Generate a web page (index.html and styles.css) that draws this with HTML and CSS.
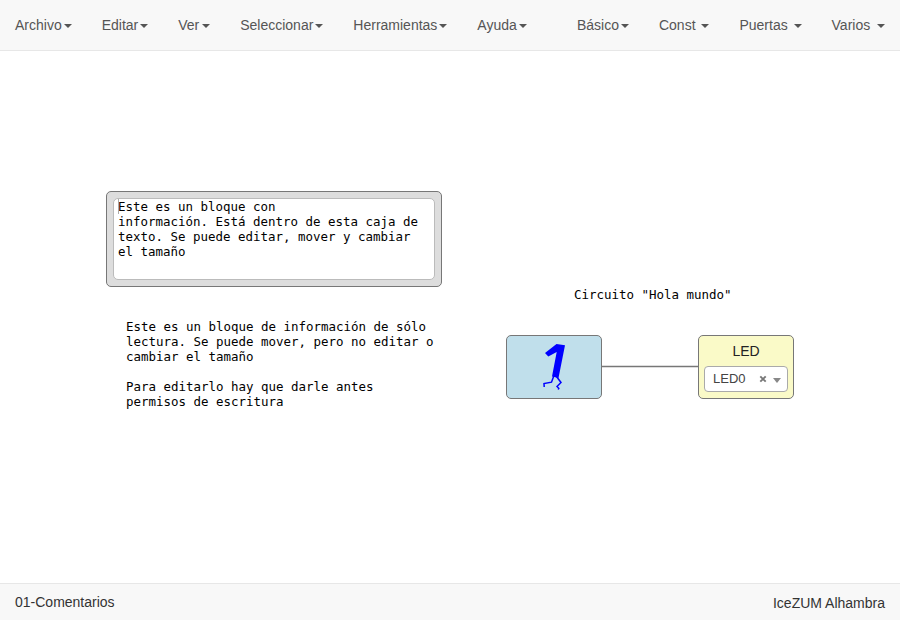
FILE: index.html
```html
<!DOCTYPE html>
<html lang="es">
<head>
<meta charset="utf-8">
<title>01-Comentarios</title>
<link rel="stylesheet" href="styles.css">
</head>
<body>
<nav class="navbar">
  <ul class="menu">
    <li>Archivo<b class="caret"></b></li>
    <li>Editar<b class="caret"></b></li>
    <li class="wide">Ver<b class="caret"></b></li>
    <li>Seleccionar<b class="caret"></b></li>
    <li>Herramientas<b class="caret"></b></li>
    <li>Ayuda<b class="caret"></b></li>
  </ul>
  <ul class="menu">
    <li>Básico<b class="caret"></b></li>
    <li>Const <b class="caret"></b></li>
    <li>Puertas <b class="caret"></b></li>
    <li class="wide">Varios <b class="caret"></b></li>
  </ul>
</nav>
<main class="canvas">
  <div class="node info-box">
    <div class="editor"><span class="cursor"></span>Este es un bloque con
información. Está dentro de esta caja de
texto. Se puede editar, mover y cambiar
el tamaño</div>
  </div>
  <div class="node note note-readonly">Este es un bloque de información de sólo
lectura. Se puede mover, pero no editar o
cambiar el tamaño

Para editarlo hay que darle antes
permisos de escritura</div>
  <div class="node note note-title">Circuito "Hola mundo"</div>
  <div class="node wire"></div>
  <div class="node block block-one">
    <svg width="30" height="50" viewBox="0 0 30 50">
      <path fill="#00f" d="M16.500 2 25 3.300 18.500 36 12 34.500 16.700 10 8.300 14.500 5 11z"/>
      <path fill="none" stroke="#00f" stroke-width="1.500" d="M13.800 34 11.500 40.200 4 41.500 4.200 45M16.500 34.500 21 40.500 17 44.500 18.800 46.300 18.200 47.500"/>
    </svg>
  </div>
  <div class="node block block-led">
    <div class="led-label">LED</div>
    <div class="select"><span class="value">LED0</span>
      <svg class="clear" width="8" height="8" viewBox="0 0 8 8"><path d="M1.300 1.300 6.700 6.700M6.700 1.300 1.300 6.700" stroke="#777" stroke-width="1.900"/></svg>
      <i class="arrow"></i></div>
  </div>
</main>
<footer class="footer"><span>01-Comentarios</span><span class="board">IceZUM Alhambra</span></footer>
</body>
</html>
```
FILE: styles.css
```css
* { box-sizing: border-box; }
body {
  margin: 0;
  height: 620px;
  display: flex;
  flex-direction: column;
  overflow: hidden;
  background: #fff;
  color: #333;
  font: 14px/20px "Liberation Sans", Arial, sans-serif;
}
.navbar {
  height: 51px;
  flex: none;
  display: flex;
  justify-content: space-between;
  background: #f8f8f8;
  border-bottom: 1px solid #e7e7e7;
  color: #555;
}
.menu { display: flex; margin: 0; padding: 0; list-style: none; }
.menu li { padding: 15px; white-space: nowrap; }
.caret {
  display: inline-block;
  margin-left: 2px;
  vertical-align: middle;
  border-top: 4px solid #555;
  border-left: 4px solid transparent;
  border-right: 4px solid transparent;
}
.wide .caret { margin-left: 2.900px; }
.canvas { flex: 1; position: relative; }
.node { position: absolute; }
.info-box {
  left: 106px;
  top: 140px;
  width: 336px;
  height: 96px;
  padding: 6px;
  background: #ddd;
  border: 1px solid #777;
  border-radius: 5px;
}
.editor, .note {
  font: 12.46px/15px "DejaVu Sans Mono", monospace;
  color: #000;
  white-space: pre;
}
.editor {
  position: relative;
  height: 82px;
  padding: 0 4px;
  background: #fff;
  border: 1px solid #bbb;
  border-radius: 5px;
}
.cursor {
  position: absolute;
  left: 4px;
  top: 0;
  width: 1px;
  height: 15px;
  background: #aaa;
}
.note-readonly { left: 126px; top: 268px; }
.note-title { left: 574px; top: 236px; }
.wire {
  left: 601px;
  top: 314px;
  width: 98px;
  height: 3px;
  background: #777;
  border: solid #ddd;
  border-width: 1px 0;
}
.block {
  width: 96px;
  height: 64px;
  top: 284px;
  border: 1px solid #777;
  border-radius: 5px;
}
.block-one { left: 506px; background: #c0dfeb; padding: 6px 0 0 33px; }
.block-one svg { display: block; }
.block-led { left: 698px; background: #fafac8; padding: 5px 5px 0; }
.led-label { height: 25px; text-align: center; color: #222; }
.select {
  display: flex;
  align-items: center;
  height: 26px;
  padding: 0 6px 0 8px;
  background: #fff;
  border: 1px solid #aaa;
  border-radius: 4px;
  color: #444;
  font-size: 13px;
}
.clear { margin: 0 6px 1px auto; }
.arrow {
  margin-top: 3px;
  border-top: 5px solid #888;
  border-left: 4px solid transparent;
  border-right: 4px solid transparent;
}
.footer {
  height: 37px;
  flex: none;
  display: flex;
  justify-content: space-between;
  padding: 8px 15px;
  background: #f8f8f8;
  border-top: 1px solid #e7e7e7;
}
.board { padding-top: 1px; }
```
